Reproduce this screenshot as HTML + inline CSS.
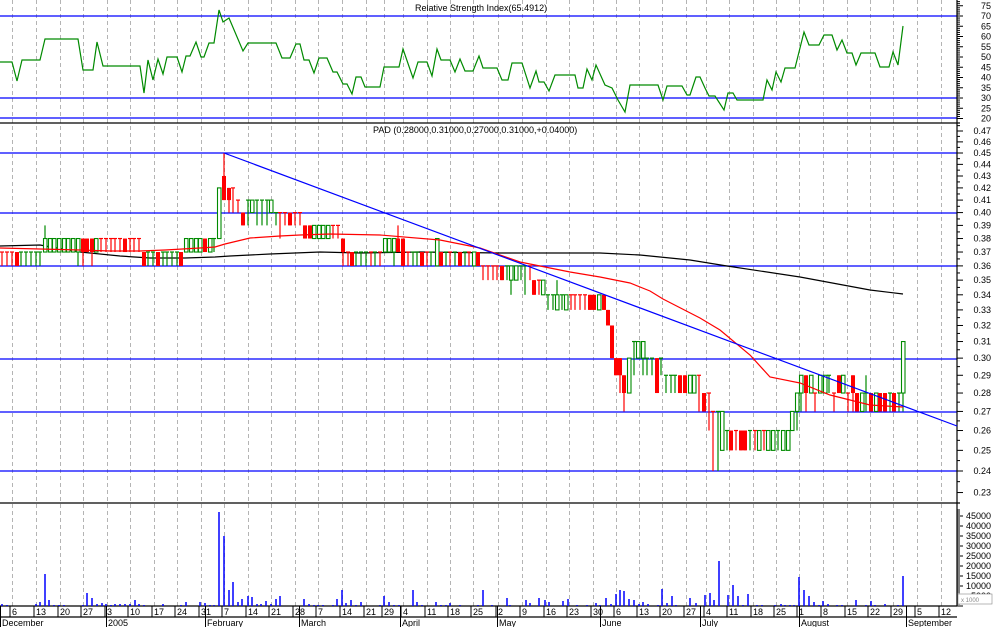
<!DOCTYPE html>
<html><head><meta charset="utf-8"><style>
html,body{margin:0;padding:0;background:#fff;}
svg{display:block;font-family:"Liberation Sans",sans-serif;}
</style></head><body>
<svg id="s" width="994" height="627" viewBox="0 0 994 627" xmlns="http://www.w3.org/2000/svg">
<rect width="994" height="627" fill="#fff"/>
<g id="grid" stroke="#b4b4b4" stroke-dasharray="4,3" stroke-width="1"></g>
<g stroke="#0000ff" stroke-width="1.2">
<line x1="0" y1="16" x2="957" y2="16"/><line x1="0" y1="98" x2="957" y2="98"/><line x1="0" y1="118" x2="957" y2="118"/>
<line x1="0" y1="153" x2="957" y2="153"/><line x1="0" y1="213" x2="957" y2="213"/><line x1="0" y1="266" x2="957" y2="266"/>
<line x1="0" y1="359" x2="957" y2="359"/><line x1="0" y1="412" x2="957" y2="412"/><line x1="0" y1="471" x2="957" y2="471"/>
</g>
<g stroke="#000" stroke-width="1.2">
<line x1="0" y1="123" x2="960" y2="123"/><line x1="0" y1="503" x2="960" y2="503"/>
<line x1="957" y1="0" x2="957" y2="606"/>
<line x1="0" y1="606" x2="957" y2="606"/><line x1="0" y1="617" x2="957" y2="617"/>
</g>
<text x="415" y="11" font-size="9">Relative Strength Index(65.4912)</text>
<text x="373" y="133" font-size="9">PAD (0.28000,0.31000,0.27000,0.31000,+0.04000)</text>
<polyline fill="none" stroke="#008a00" stroke-width="1.2" points="0,62 12,62 17,81 22,60 40,60 45,39 78,39 83,70 93,70 97,42 103,66 140,66 144,93 148,60 153,80 158,59 163,74 167,57 177,57 182,72 186,56 190,56 196,42 201,57 204,57 209,43 214,43 219,10 223,22 229,18 243,51 248,43 276,43 282,58 290,58 296,44 300,44 304,60 309,60 314,73 319,58 327,58 333,72 337,72 343,84 347,84 352,94 356,77 361,77 365,87 380,87 384,67 399,67 403,49 413,78 418,62 427,62 432,76 437,49 441,60 450,60 455,72 460,59 465,71 473,71 479,56 483,68 497,68 502,80 508,80 512,63 522,63 530,88 536,71 539,82 544,82 549,91 555,75 575,75 578,88 583,88 587,69 592,80 596,65 605,85 612,88 618,100 625,112 630,85 658,85 663,100 667,86 682,86 687,95 690,95 696,77 700,77 705,88 709,96 715,96 724,110 728,93 733,93 737,100 763,100 767,80 772,90 776,72 781,82 785,68 795,68 804,32 809,45 819,45 824,35 832,35 837,50 842,40 847,53 852,53 856,65 861,53 875,53 880,67 889,67 893,52 898,65 903,26"/>
<polyline fill="none" stroke="#000" stroke-width="1.2" points="0,246 40,245 80,252 120,256 150,258 185,258 215,257 230,256 270,254 320,252 360,253 420,252 500,253 600,253 640,255 690,260 727,266 800,277 870,290 903,294"/>
<g id="cs"></g>
<polyline fill="none" stroke="#ff0000" stroke-width="1.2" points="0,248 40,249 80,250 110,251 140,251 165,250 200,248 215,247 225,244 250,238 280,236 300,235 330,234 380,235 440,240 480,248 520,262 570,272 600,277 630,283 650,291 663,299 700,318 720,330 750,355 770,377 800,383 830,395 870,405 903,407"/>
<line x1="224" y1="153" x2="957" y2="426" stroke="#0000ff" stroke-width="1.2"/>
<g id="vol" stroke="#0000ff" stroke-width="1.5"></g>
<g id="ax" font-size="9" fill="#000"></g>
<g id="bt" font-size="9" fill="#000"></g>
<rect x="958" y="594" width="34" height="10" fill="#fff" stroke="#888" stroke-width="0.6"/>
<text x="961" y="602" font-size="6" fill="#888">x 1000</text>
</svg>
<script>
var NS="http://www.w3.org/2000/svg";
function el(p,t,a,txt){var e=document.createElementNS(NS,t);for(var k in a)e.setAttribute(k,a[k]);if(txt!=null)e.textContent=txt;document.getElementById(p).appendChild(e);return e;}
var G=[12,36,60,83,107,130,154,177,201,224,248,271,295,318,342,366,384,403,427,450,473,498,522,546,569,593,616,639,662,686,706,729,753,776,799,823,847,870,893,917,941];
var L=["6","13","20","27","3","10","17","24","31","7","14","21","28","7","14","21","29","4","11","18","25","2","9","16","23","30","6","13","20","27","4","11","18","25","1","8","15","22","29","5","12"];
G.forEach(function(x,i){el("grid","line",{x1:x+.5,y1:0,x2:x+.5,y2:606});
el("bt","line",{x1:x-2,y1:606,x2:x-2,y2:617,stroke:"#000","stroke-width":1});
el("bt","text",{x:x,y:615},L[i]);});
[["December",0],["2005",106],["February",205],["March",299],["April",400],["May",497],["June",600],["July",700],["August",799],["September",906]].forEach(function(m){
el("bt","line",{x1:m[1]+.5,y1:606,x2:m[1]+.5,y2:627,stroke:"#000","stroke-width":1});
el("bt","text",{x:m[1]+2,y:626},m[0]);});
function yp(c){return 153+505.9*Math.log(45/c);}
// axis
for(var v=20;v<=80;v++){var y=16+(70-v)*2.05;if(y<0)continue;el("ax","line",{x1:957,y1:y,x2:v%5==0?963:960,y2:y,stroke:"#000","stroke-width":1});if(v%5==0&&v<80)el("ax","text",{x:991,y:y+3,"text-anchor":"end"},v);}
for(var c=23;c<=47.5;c+=0.5){var y=yp(c);if(y<125)continue;var maj=Math.abs(c-Math.round(c))<.01;el("ax","line",{x1:957,y1:y,x2:maj?963:960,y2:y,stroke:"#000","stroke-width":1});if(maj)el("ax","text",{x:991,y:y+3,"text-anchor":"end"},(c/100).toFixed(2));}
for(var v=0;v<=48000;v+=1000){var y=606-v*0.002;if(y<505)break;el("ax","line",{x1:957,y1:y,x2:v%5000==0?963:960,y2:y,stroke:"#000","stroke-width":1});if(v%5000==0&&v>=5000)el("ax","text",{x:991,y:y+3,"text-anchor":"end"},v);}
// volume
var V=[[2,2],[7,1],[36,2],[40,4],[45,32],[49,6],[54,1],[59,1],[64,1],[83,1],[87,13],[92,8],[97,2],[102,3],[106,2],[111,1],[115,2],[120,2],[125,2],[130,2],[135,6],[139,2],[144,1],[163,2],[181,1],[186,4],[200,4],[205,3],[210,1],[214,1],[219,94],[224,70],[229,16],[233,24],[238,4],[242,7],[248,10],[252,9],[257,2],[261,2],[266,5],[271,2],[276,7],[280,10],[304,7],[309,2],[314,1],[318,1],[323,1],[333,1],[337,7],[342,16],[346,3],[351,6],[356,1],[361,4],[380,1],[384,10],[389,4],[394,1],[399,1],[413,16],[417,4],[422,1],[436,4],[441,1],[446,1],[450,3],[460,1],[478,1],[483,16],[492,1],[507,8],[510,1],[526,6],[530,3],[539,8],[545,6],[549,4],[563,5],[568,7],[577,1],[587,1],[596,3],[600,1],[606,8],[611,2],[616,12],[620,16],[624,15],[629,7],[634,6],[639,2],[643,4],[648,2],[658,1],[662,17],[667,3],[672,10],[676,1],[690,8],[696,3],[705,11],[710,13],[714,6],[719,45],[728,11],[733,21],[738,10],[743,1],[748,12],[757,1],[762,1],[775,1],[781,2],[785,1],[790,1],[794,1],[799,29],[804,16],[809,10],[814,4],[819,1],[823,5],[828,2],[837,1],[842,1],[856,6],[866,1],[871,5],[875,1],[885,2],[898,1],[903,30]];
V.forEach(function(b){el("vol","line",{x1:b[0],y1:606,x2:b[0],y2:606-b[1]});});
// candles x,t,o,c,h,l
var C="2r37,37,37,36;7r37,37,37,36;12r37,37,37,36;17r37,36,37,36;21g37,37,37,36;26g37,37,37,36;31g37,37,37,36;36g37,37,37,36;40g37,37,37,36;45g37,38,39,37;50g37,38,38,37;54g37,38,38,37;59g37,38,38,37;64g37,38,38,37;68g37,38,38,37;73g37,38,38,37;78g37,38,38,36;83r38,37,38,36;87r38,37,38,37;92r38,37,38,36;96g37,38,38,37;101r38,38,38,37;106r38,38,38,37;111r38,38,38,37;115r38,38,38,37;120r38,38,38,37;125r38,37,38,37;130r38,38,38,37;134r38,38,38,37;139r38,38,38,37;144r37,36,37,36;148g37,37,37,36;153g37,37,37,36;158r37,36,37,36;163g37,37,37,36;167g37,37,37,36;172g37,37,37,36;177g37,37,37,36;181r37,36,37,36;186g37,38,38,37;191g37,38,38,37;196g37,38,38,37;200g37,38,38,37;205r38,37,38,37;210g37,38,38,37;214g38,38,38,37;219g38,42,42,38;224r43,41,45,41;229r42,41,42,40;233r42,42,42,40;238r41,41,41,40;243r40,39,40,39;248g41,41,41,39;252g40,41,41,40;257g41,41,41,39;262g41,41,41,39;267g41,41,41,39;271g40,41,41,40;276g40,40,40,39;280r40,40,40,38;285r40,40,40,39;290r40,39,40,39;295r40,40,40,39;300r40,40,40,39;305r39,38,39,38;310r39,38,39,38;314g38,39,39,38;319g38,39,39,38;323g38,39,39,38;328g38,39,39,38;333r39,39,39,38;338r39,39,39,38;343r38,37,38,36;348r37,37,37,36;352r37,36,37,36;356g37,37,37,36;361g37,37,37,36;366g37,37,37,36;371r37,37,37,36;375g37,37,37,36;380r37,37,37,36;385g37,38,38,37;389g37,38,38,37;394g37,38,38,36;398r38,37,39,37;403r38,36,38,36;408r37,37,37,36;413g37,37,37,36;417g37,37,37,36;422r37,36,37,36;427r37,37,37,36;431g37,37,37,36;437g36,38,38,36;441r37,36,37,36;446g37,37,37,36;450r37,37,37,36;455g37,37,37,36;460r37,36,37,36;465g37,37,37,36;469r37,37,37,36;474g36,37,37,36;478r37,36,37,36;483r36,36,36,35;488r36,36,36,35;493r36,36,36,35;497r36,36,36,35;502r36,35,36,35;507g36,36,36,35;511g35,36,36,34;516g35,36,36,35;521g36,36,36,35;525g36,36,36,34;530r36,36,36,35;534r35,34,35,34;539r35,35,35,34;543g34,35,35,34;548g34,34,34,33;553g34,34,34,33;557g33,34,35,33;562g34,34,34,33;566g33,34,34,33;571r34,34,34,33;575r34,34,34,33;580r34,34,34,33;585r34,34,34,33;590r34,33,34,33;594r34,33,34,33;599g33,34,34,33;604r34,33,34,33;608r33,32,33,32;612r32,30,32,30;616r30,29,30,29;620r30,29,30,28;624r29,28,29,27;629g28,30,30,28;634g31,31,31,29;638g30,31,31,30;643g30,31,31,29;647g30,30,30,29;652g30,30,30,29;657r30,28,30,28;661g30,30,30,29;666g29,29,29,28;671g29,29,29,28;675g29,29,29,28;680r29,28,29,28;685r29,28,29,28;690g28,29,29,28;694g28,29,29,28;699r29,29,29,27;704r28,27,28,27;709r28,28,28,26;713r27,27,27,24;718g27,27,27,24;722g25,27,27,25;727g26,26,26,25;731r26,25,26,25;736r26,26,26,25;741r26,25,26,25;745r26,25,26,25;750g26,26,26,25;755r26,26,26,25;759g25,26,26,25;764r26,26,26,25;768g25,26,26,25;773g25,26,26,25;778g26,26,26,25;783g25,26,26,25;788g25,26,26,25;792g26,27,27,26;797g27,28,28,26;801g28,29,29,27;806r29,28,29,27;811g28,29,29,28;815r28,28,28,27;820g28,29,29,28;825g28,29,29,28;829g29,29,29,28;834r28,28,28,27;839r29,28,29,28;843g28,29,29,28;848r28,28,28,27;853r29,28,29,27;857r28,27,28,27;862g27,28,28,27;866g28,28,29,27;871r28,27,28,27;876g27,28,28,27;880r28,27,28,27;885r28,27,28,27;890g28,28,28,27;894r28,27,28,27;899g28,28,28,27;903g28,31,31,27";
C.split(";").forEach(function(s){var x=parseFloat(s);var t=s.match(/[rg]/)[0];var a=s.split(t)[1].split(",").map(Number);
var col=t=="r"?"#ff0000":"#008a00";var o=yp(a[0]),c=yp(a[1]),h=yp(a[2]),l=yp(a[3]);
el("cs","line",{x1:x,y1:h,x2:x,y2:l,stroke:col,"stroke-width":1.2});
if(Math.abs(o-c)<1){el("cs","line",{x1:x-2,y1:o,x2:x+2,y2:o,stroke:col,"stroke-width":1.2});}
else{var top=Math.min(o,c),ht=Math.abs(o-c);
if(t=="r")el("cs","rect",{x:x-2,y:top,width:4,height:ht,fill:col});
else el("cs","rect",{x:x-1.5,y:top,width:3.5,height:ht,fill:"#fff",stroke:col,"stroke-width":1.1});}});
</script>
</body></html>
